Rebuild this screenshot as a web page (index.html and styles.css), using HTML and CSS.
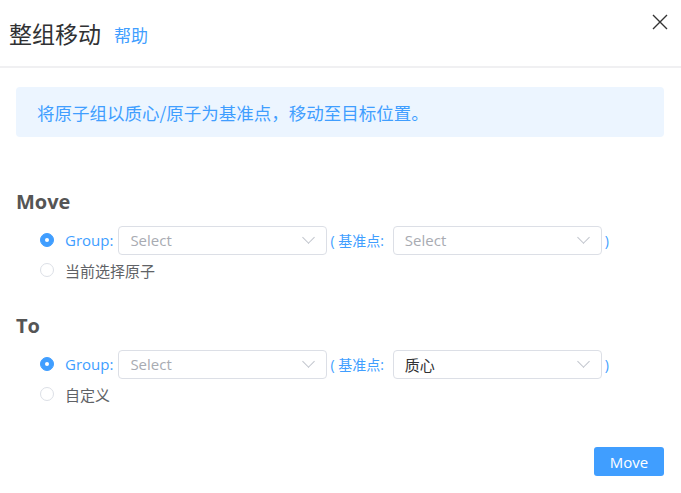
FILE: index.html
```html
<!DOCTYPE html>
<html lang="zh">
<head>
  <meta charset="UTF-8" />
  <title>整组移动</title>
  <link rel="stylesheet" href="styles.css">
</head>
<body>
  <div class="dialog">
    <header class="dialog-header">
      <h1>整组移动</h1>
      <a class="help" href="#">帮助</a>
      <span class="close">
        <svg width="16" height="16" viewBox="0 0 16 16"><path d="M1 1L15 15M15 1L1 15" stroke="#333" stroke-width="1.4" fill="none"/></svg>
      </span>
    </header>

    <div class="dialog-body">
      <div class="alert">将原子组以质心/原子为基准点，移动至目标位置。</div>

      <h2 class="section-title first">Move</h2>
      <div class="option">
        <span class="radio checked"></span>
        <span class="label-blue">Group:</span>
        <div class="select"><span class="placeholder">Select</span><span class="arrow"></span></div>
        <span class="label-blue paren">( 基准点:</span>
        <div class="select"><span class="placeholder">Select</span><span class="arrow"></span></div>
        <span class="label-blue paren">)</span>
      </div>
      <div class="option">
        <span class="radio"></span>
        <span class="label">当前选择原子</span>
      </div>

      <h2 class="section-title">To</h2>
      <div class="option">
        <span class="radio checked"></span>
        <span class="label-blue">Group:</span>
        <div class="select"><span class="placeholder">Select</span><span class="arrow"></span></div>
        <span class="label-blue paren">( 基准点:</span>
        <div class="select"><span class="value">质心</span><span class="arrow"></span></div>
        <span class="label-blue paren">)</span>
      </div>
      <div class="option">
        <span class="radio"></span>
        <span class="label">自定义</span>
      </div>

      <div class="footer">
        <button class="btn-primary">Move</button>
      </div>
    </div>
  </div>
</body>
</html>
```

FILE: styles.css
```css
body {
  margin: 0;
  font-family: "Open Sans", "Noto Sans CJK SC", sans-serif;
  background: #fff;
  color: #606266;
}

.dialog-header {
  position: relative;
  display: flex;
  align-items: center;
  height: 66px;
  padding: 0 9px;
  border-bottom: 2px solid #f0f0f2;
}
.dialog-header h1 {
  margin: 0;
  font-size: 23px;
  font-weight: normal;
  color: #303133;
  font-family: "Noto Sans CJK SC", sans-serif;
}
.help {
  margin-left: 13px;
  margin-top: 2px;
  font-size: 17px;
  color: #409eff;
  text-decoration: none;
  font-family: "Noto Sans CJK SC", sans-serif;
}
.close {
  position: absolute;
  top: 13px;
  right: 13px;
  width: 16px;
  height: 16px;
}

.dialog-body {
  padding: 19px 17px 0 16px;
}
.alert {
  height: 50px;
  display: flex;
  align-items: center;
  padding: 0 21px;
  background: #ecf5ff;
  border-radius: 4px;
  color: #409eff;
  font-size: 17.5px;
  font-family: "Noto Sans CJK SC", sans-serif;
}

.section-title {
  margin: 0 0 8px;
  font-size: 20px;
  font-weight: bold;
  color: #555;
  line-height: 30px;
}
.section-title.first {
  margin-top: 50px;
}
.option + .section-title {
  margin-top: 26px;
}

.option {
  display: flex;
  align-items: center;
  height: 30px;
  padding-left: 24px;
  font-size: 15px;
}
.radio {
  width: 14px;
  height: 14px;
  box-sizing: border-box;
  border: 1px solid #dcdfe6;
  border-radius: 50%;
  margin-right: 11px;
  position: relative;
}
.radio.checked {
  background: #409eff;
  border-color: #409eff;
}
.radio.checked::after {
  content: "";
  position: absolute;
  top: 50%;
  left: 50%;
  width: 4px;
  height: 4px;
  margin: -2px 0 0 -2px;
  background: #fff;
  border-radius: 50%;
}
.label {
  color: #606266;
}
.label-blue {
  color: #409eff;
}
.paren {
  margin: 0 4px 0 3px;
  font-size: 14px;
}

.select {
  width: 209px;
  height: 29px;
  box-sizing: border-box;
  border: 1px solid #dcdfe6;
  border-radius: 4px;
  display: flex;
  align-items: center;
  justify-content: space-between;
  padding: 0 13px 0 11px;
  margin-left: 5px;
}
.placeholder {
  color: #a8abb2;
}
.value {
  color: #303133;
}
.arrow {
  width: 8px;
  height: 8px;
  border-right: 1px solid #c0c4cc;
  border-bottom: 1px solid #c0c4cc;
  transform: rotate(45deg);
  margin-top: -5px;
}

.footer {
  display: flex;
  justify-content: flex-end;
  margin-top: 38px;
}
.btn-primary {
  width: 70px;
  height: 29px;
  border: none;
  border-radius: 3px;
  background: #409eff;
  color: #fff;
  font-size: 15px;
  font-family: "Open Sans", sans-serif;
}
```
